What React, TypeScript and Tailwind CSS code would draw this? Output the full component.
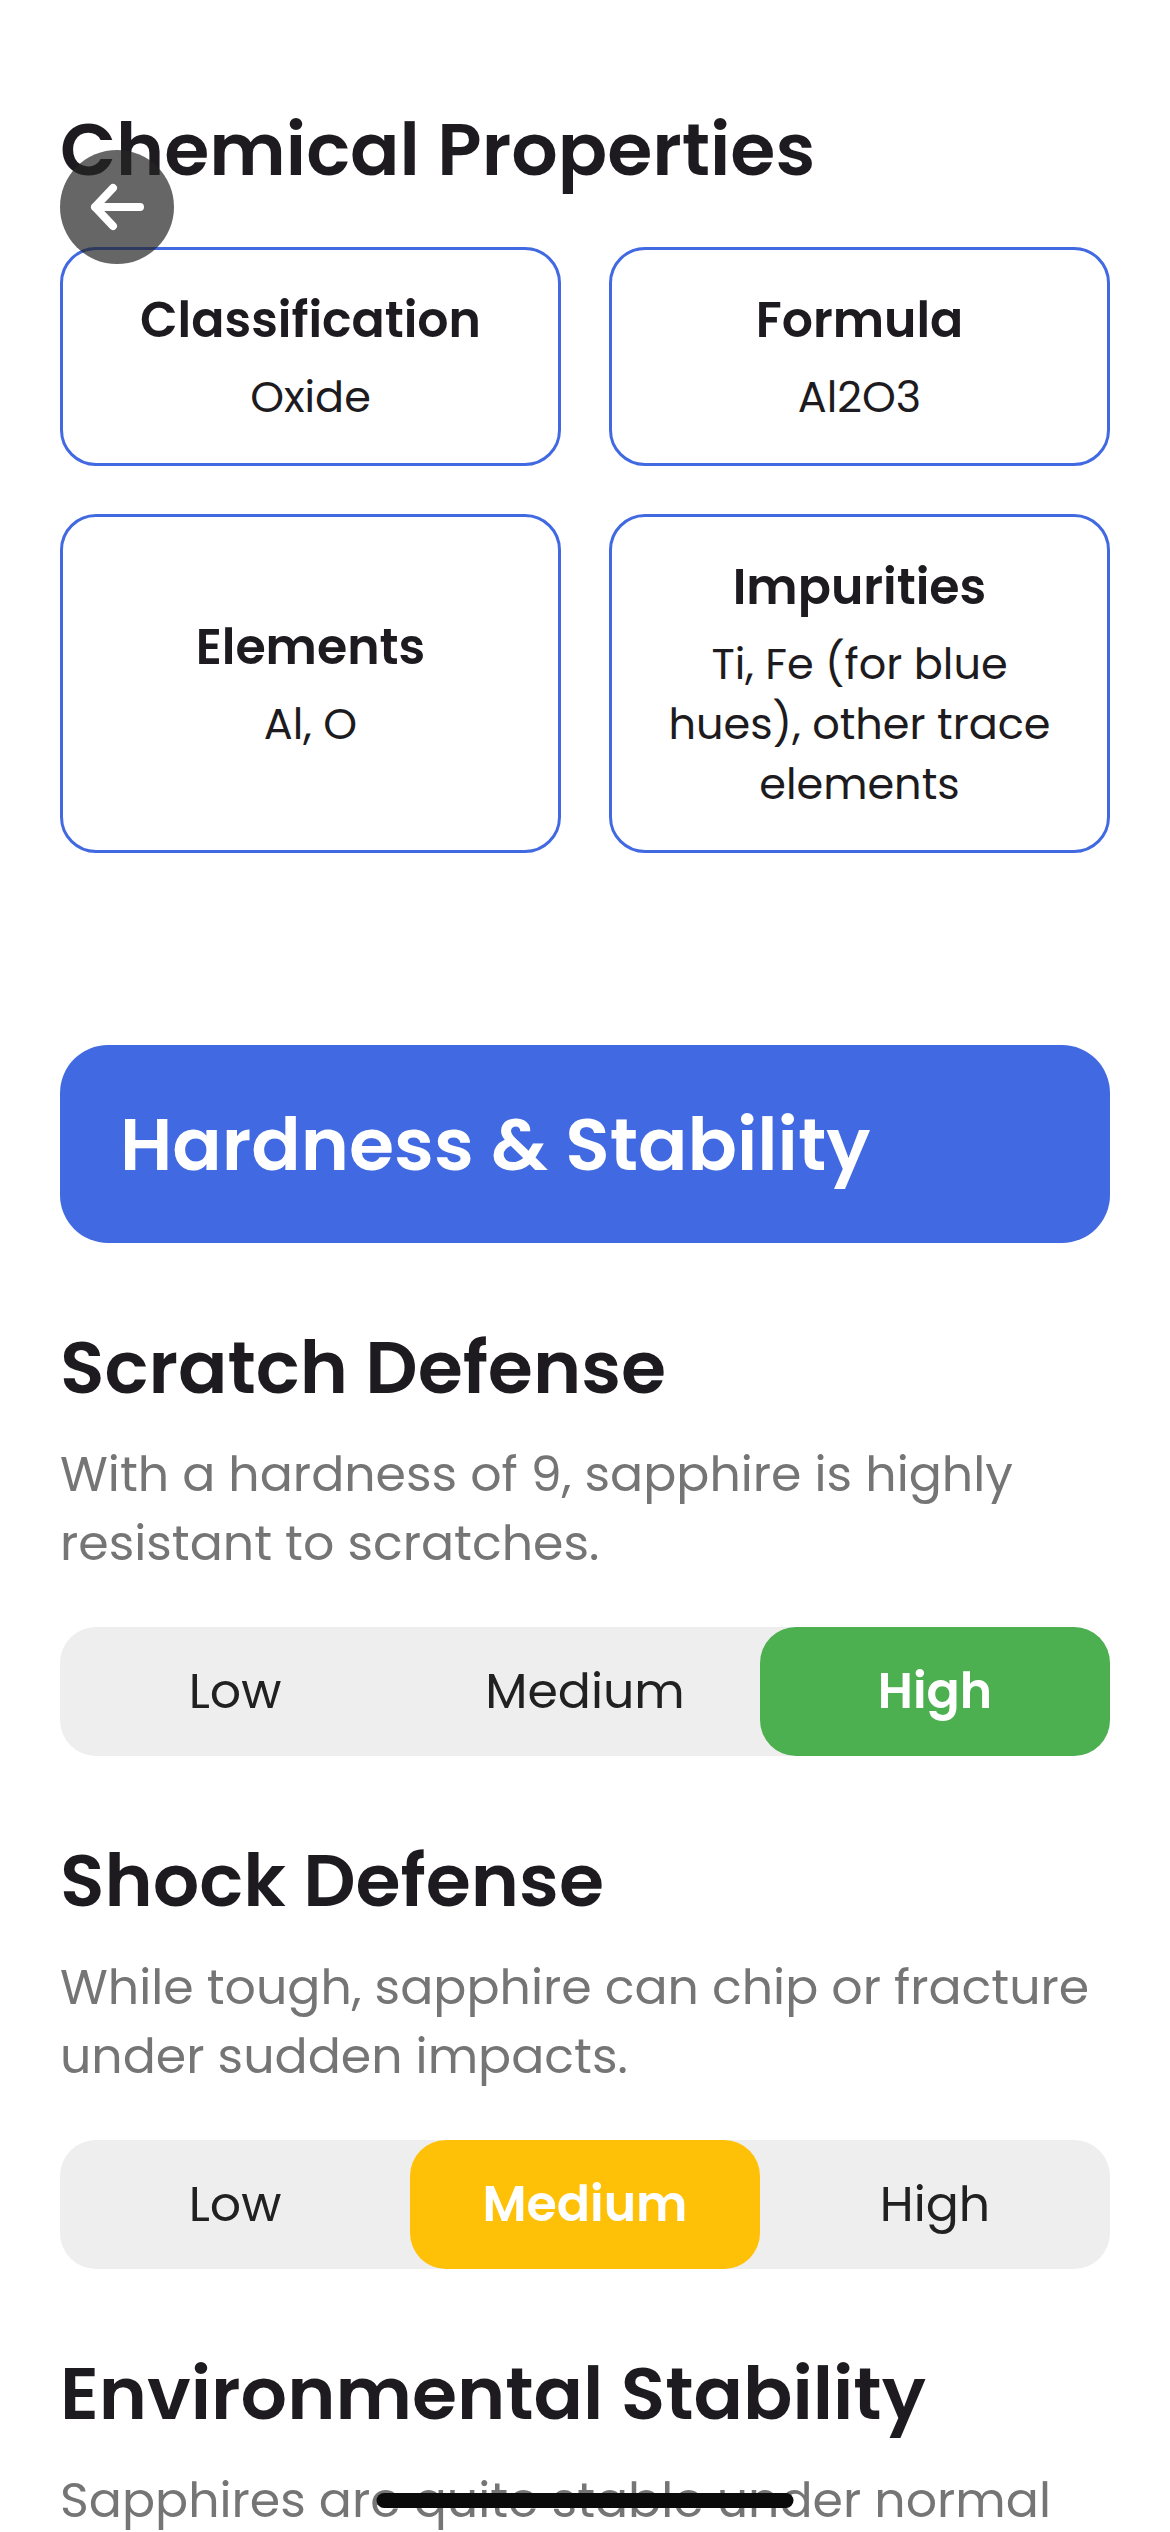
import React from "react";

type Level = "Low" | "Medium" | "High";

interface Property {
  label: string;
  value: string;
}

interface Rating {
  title: string;
  description: string;
  level?: Level;
}

const LEVELS: Level[] = ["Low", "Medium", "High"];

const levelColors: Record<Level, string> = {
  Low: "bg-[#f44336]",
  Medium: "bg-[#ffc107]",
  High: "bg-[#4caf50]",
};

const chemicalProperties: Property[] = [
  { label: "Classification", value: "Oxide" },
  { label: "Formula", value: "Al2O3" },
  { label: "Elements", value: "Al, O" },
  { label: "Impurities", value: "Ti, Fe (for blue hues), other trace elements" },
];

const ratings: Rating[] = [
  {
    title: "Scratch Defense",
    description:
      "With a hardness of 9, sapphire is highly resistant to scratches.",
    level: "High",
  },
  {
    title: "Shock Defense",
    description:
      "While tough, sapphire can chip or fracture under sudden impacts.",
    level: "Medium",
  },
  {
    title: "Environmental Stability",
    description: "Sapphires are quite stable under normal",
  },
];

const PropertyCard = ({ label, value }: Property) => (
  <div className="flex flex-col items-center justify-center gap-3 rounded-[36px] border-3 border-[#4169e1] p-9 text-center">
    <dt className="text-[49px] leading-[69px] font-semibold">{label}</dt>
    <dd className="text-[43px] leading-[60px]">{value}</dd>
  </div>
);

const LevelBar = ({ level }: { level: Level }) => (
  <ul className="mt-[49px] grid grid-cols-3 rounded-[36px] bg-[#eeeeee] text-center text-[49px] leading-[69px] text-[#212121]">
    {LEVELS.map((item) => (
      <li
        key={item}
        className={`rounded-[36px] py-[30px] ${
          item === level ? `${levelColors[item]} font-semibold text-white` : ""
        }`}
      >
        {item}
      </li>
    ))}
  </ul>
);

const RatingSection = ({ title, description, level }: Rating) => (
  <section>
    <h2 className="text-[73px] leading-[96px] font-semibold">{title}</h2>
    <p className="mt-6 text-[49px] leading-[69px] text-[#757575]">
      {description}
    </p>
    {level && <LevelBar level={level} />}
  </section>
);

const App = () => {
  return (
    <div className="relative h-screen overflow-hidden bg-white font-[Poppins,Inter,sans-serif] text-[#1d1b20]">
      <main className="h-full overflow-y-auto px-[60px] pt-[102px] [scrollbar-width:none]">
        <h2 className="text-[73px] leading-[96px] font-semibold">
          Chemical Properties
        </h2>
        <dl className="mt-[49px] grid grid-cols-2 gap-12">
          {chemicalProperties.map((property) => (
            <PropertyCard key={property.label} {...property} />
          ))}
        </dl>

        <h1 className="mt-48 rounded-[48px] bg-[#4169e1] px-[60px] pt-[52px] pb-[50px] text-[73px] leading-[96px] font-semibold text-white">
          Hardness &amp; Stability
        </h1>
        <div className="mt-[77px] flex flex-col gap-[77px]">
          {ratings.map((rating) => (
            <RatingSection key={rating.title} {...rating} />
          ))}
        </div>
      </main>

      <button
        type="button"
        aria-label="Back"
        className="absolute top-[150px] left-[60px] flex size-[114px] items-center justify-center rounded-full bg-[#252525]/70"
      >
        <svg
          viewBox="0 0 72 72"
          className="size-[72px]"
          fill="none"
          stroke="white"
          strokeWidth="8"
          strokeLinecap="round"
          strokeLinejoin="round"
        >
          <path d="M59 36H14M32 17L14 36L32 55" />
        </svg>
      </button>

      {/* home indicator */}
      <div className="absolute bottom-6 left-1/2 h-[15px] w-[417px] -translate-x-1/2 rounded-full bg-[#0a0a0a]" />
    </div>
  );
};

export default App;
